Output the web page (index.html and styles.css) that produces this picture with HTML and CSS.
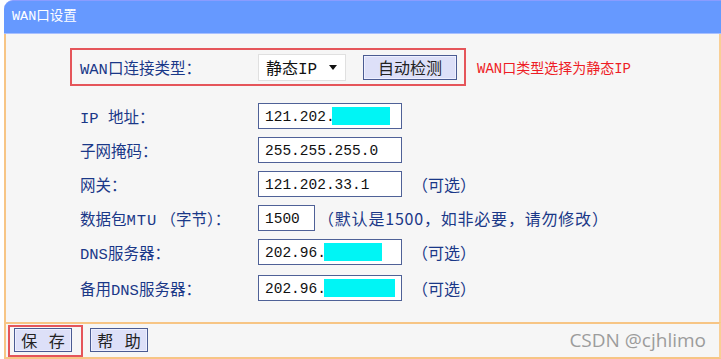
FILE: index.html
```html
<!DOCTYPE html>
<html lang="zh-CN">
<head>
<meta charset="utf-8">
<title>WAN口设置</title>
<link rel="stylesheet" href="styles.css">
</head>
<body>
<div class="panel">
  <div class="header">WAN口设置</div>
  <div class="body">
    <div class="type-row">
      <div class="type-box">
        <span class="label">WAN口连接类型：</span>
        <div class="select"><span>静态IP</span><span class="arrow"></span></div>
        <button class="btn detect">自动检测</button>
      </div>
      <span class="hint">WAN口类型选择为静态IP</span>
    </div>
    <div class="form">
      <div class="row">
        <span class="label">IP 地址：</span>
        <div class="input"><span>121.202.</span><span class="mask mask-ip"></span></div>
      </div>
      <div class="row">
        <span class="label">子网掩码：</span>
        <div class="input"><span>255.255.255.0</span></div>
      </div>
      <div class="row">
        <span class="label">网关：</span>
        <div class="input"><span>121.202.33.1</span></div>
        <span class="note opt">（可选）</span>
      </div>
      <div class="row">
        <span class="label">数据包<span class="wide">MTU</span>（字节）：</span>
        <div class="input short"><span>1500</span></div>
        <span class="note mtu">（默认是1500，如非必要，请勿修改）</span>
      </div>
      <div class="row">
        <span class="label">DNS服务器：</span>
        <div class="input"><span>202.96.</span><span class="mask mask-dns"></span></div>
        <span class="note opt">（可选）</span>
      </div>
      <div class="row last">
        <span class="label">备用DNS服务器：</span>
        <div class="input"><span>202.96.</span><span class="mask mask-dns2"></span></div>
        <span class="note opt">（可选）</span>
      </div>
    </div>
  </div>
  <div class="footer">
    <div class="save-box"><button class="btn fbtn">保 存</button></div>
    <button class="btn fbtn help">帮 助</button>
    <span class="watermark">CSDN @cjhlimo</span>
  </div>
</div>
</body>
</html>
```
FILE: styles.css
```css
* { box-sizing: border-box; }
html, body {
  margin: 0;
  padding: 0;
  background: #ffffff;
  width: 721px;
  height: 359px;
  overflow: hidden;
}
body {
  font-family: "Liberation Mono", "Noto Sans CJK SC", monospace;
}
.panel {
  margin-left: 4px;
  width: 717px;
  position: relative;
}
.header {
  height: 34px;
  background: #6699ff;
  border-top: 1px solid #8a9cff;
  border-bottom: 1px solid #a8c0ff;
  border-top-left-radius: 9px;
  color: #ffffff;
  font-size: 13.5px;
  line-height: 31px;
  padding-left: 8px;
}
.body {
  height: 288px;
  background: #f6f6f6;
  border-left: 2px solid #f7c585;
  border-right: 2px solid #f9cf95;
  padding-top: 14px;
}
.type-row {
  display: flex;
  align-items: center;
  padding-left: 64px;
}
.type-box {
  display: flex;
  align-items: center;
  width: 396px;
  height: 38px;
  border: 2px solid #e5555a;
  padding-left: 8px;
}
.label {
  width: 178px;
  flex: none;
  color: #1a3888;
  font-size: 15.5px;
  white-space: nowrap;
}
.wide {
  letter-spacing: 1px;
  margin-right: 3px;
}
.select {
  width: 88px;
  height: 27px;
  background: #ffffff;
  border: 1px solid #e0e0e0;
  display: flex;
  align-items: center;
  padding-left: 7px;
  font-size: 16px;
  color: #111;
}
.arrow {
  margin-left: 12px;
  width: 0;
  height: 0;
  border-left: 4px solid transparent;
  border-right: 4px solid transparent;
  border-top: 5px solid #111;
}
.btn {
  background: #dde0f8;
  border: 1px solid #4a5b92;
  box-shadow: inset 0 0 0 1px #eef0ff;
  color: #222;
  font-family: "Noto Sans CJK SC", sans-serif;
  font-size: 16px;
  padding: 0;
  margin: 0;
  line-height: 1;
  white-space: nowrap;
}
.detect {
  margin-left: 17px;
  width: 94px;
  height: 25px;
}
.hint {
  margin-left: 11px;
  color: #ee1c25;
  font-size: 14px;
  white-space: nowrap;
}
.form {
  margin-top: 13px;
  display: flex;
  flex-direction: column;
  padding-left: 74px;
}
.row {
  height: 34px;
  display: flex;
  align-items: center;
}
.row.last {
  margin-top: 2px;
}
.input {
  width: 144px;
  height: 26px;
  background: #ffffff;
  border: 1px solid #4f6197;
  display: flex;
  align-items: stretch;
  padding: 3px 0 3px 6px;
  font-size: 14.5px;
  line-height: 20px;
  color: #111;
}
.input.short {
  width: 57px;
}
.mask {
  background: #00f5f5;
  display: block;
}
.mask-ip { width: 58px; margin-left: -3px; }
.mask-dns { width: 58px; margin-left: -2px; }
.mask-dns2 { width: 71px; margin-left: -2px; }
.note {
  color: #1a3888;
  font-size: 16px;
  font-family: "Noto Sans CJK SC", sans-serif;
  white-space: nowrap;
}
.note.opt { margin-left: 10px; }
.note.mtu { margin-left: 3px; letter-spacing: 0.8px; }
.footer {
  height: 37px;
  background: #f6f6f6;
  border-top: 2px solid #f7c585;
  border-bottom: 2px solid #f7c585;
  border-left: 2px solid #f7c585;
  border-right: 2px solid #f9cf95;
  display: flex;
  align-items: flex-start;
  padding-left: 2px;
  padding-top: 1px;
  position: relative;
}
.save-box {
  width: 75px;
  height: 32px;
  border: 2px solid #e5555a;
  padding: 1px 0 0 4px;
}
.fbtn {
  width: 58px;
  height: 24px;
  letter-spacing: 4px;
  padding-left: 4px;
}
.help {
  margin-left: 7px;
  margin-top: 3px;
}
.watermark {
  position: absolute;
  right: 13px;
  top: 3px;
  color: #9c9c9c;
  font-family: "Open Sans", "Noto Sans", sans-serif;
  font-size: 19px;
  line-height: 26px;
}
```
